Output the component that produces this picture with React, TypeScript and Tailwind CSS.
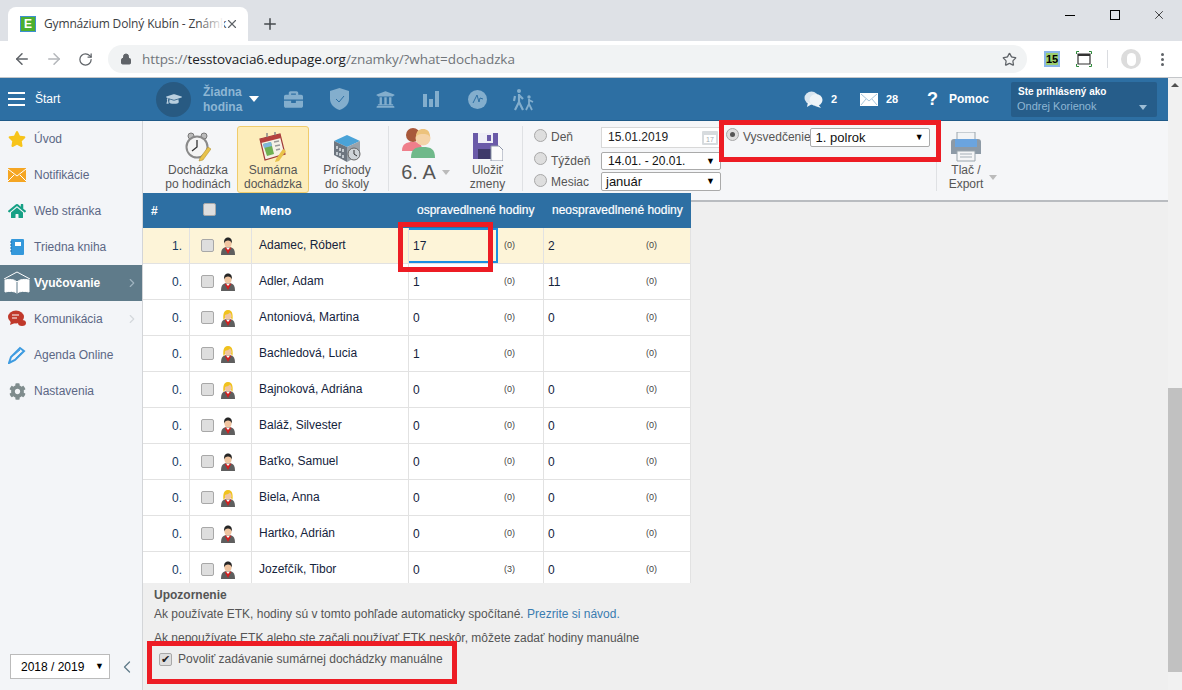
import { FaBriefcase, FaCog, FaGraduationCap, FaHome, FaStar, FaUniversity } from "react-icons/fa";
import { ArrowLeft, ArrowRight, ChevronLeft, ChevronRight, Lock, Plus, RotateCw, Star, X } from "lucide-react";

type Student = { name: string; f?: boolean; a: string; an: string; b: string };

const students: Student[] = [
  { name: "Adamec, Róbert", a: "17", an: "(0)", b: "2" },
  { name: "Adler, Adam", a: "1", an: "(0)", b: "11" },
  { name: "Antoniová, Martina", f: true, a: "0", an: "(0)", b: "0" },
  { name: "Bachledová, Lucia", f: true, a: "1", an: "(0)", b: "" },
  { name: "Bajnoková, Adriána", f: true, a: "0", an: "(0)", b: "0" },
  { name: "Baláž, Silvester", a: "0", an: "(0)", b: "0" },
  { name: "Baťko, Samuel", a: "0", an: "(0)", b: "0" },
  { name: "Biela, Anna", f: true, a: "0", an: "(0)", b: "0" },
  { name: "Hartko, Adrián", a: "0", an: "(0)", b: "0" },
  { name: "Jozefčík, Tibor", a: "0", an: "(3)", b: "0" },
];

const Person = ({ f }: { f?: boolean }) => (
  <svg width="14" height="18" viewBox="0 0 14 18">
    <path d="M0 18c0-6 2-8 7-8s7 2 7 8z" fill="#5e5e5e" />
    <path d="M3.500 10.500L7 17l3.500-6.500L7 11.500z" fill="#d32020" />
    <path d="M5 10.500h4L7 13z" fill="#fff" />
    <ellipse cx="7" cy="6" rx="3.600" ry="4.500" fill="#f0c4a0" />
    {f ? (
      <path d="M2.500 11C2 7 2 1 7 1s5 6 4.500 10L10 9c.8-2 .5-4-1-5.500C8 5 5 5.500 4 6c-.2 1 0 2 0 3z" fill="#f0c21d" />
    ) : (
      <path d="M3.200 6.500C2.500 2 5 .5 7 .5s4.500 1.500 3.800 6C10.300 4.500 9 3.500 7 3.500S3.700 4.500 3.200 6.500z" fill="#262626" />
    )}
  </svg>
);

const Check = () => (
  <span className="inline-block w-[13px] h-[13px] rounded-[2px] border border-[#a8a8a8] bg-[#dedede]" />
);

const Radio = ({ on, cls }: { on?: boolean; cls?: string }) => (
  <span className={`w-[13px] h-[13px] rounded-full border border-[#a8a8a8] bg-[#dedede] flex items-center justify-center shrink-0 ${cls ?? ""}`}>
    {on && <span className="w-[5px] h-[5px] rounded-full bg-[#555]" />}
  </span>
);

const Caret = () => <span className="text-[9px] text-black leading-none">▼</span>;

const SideRow = ({ icon, label, active, arrow }: { icon: React.ReactNode; label: string; active?: boolean; arrow?: boolean }) => (
  <div className={`h-[36px] flex items-center ${active ? "bg-[#5f7b8a] text-white font-bold" : "text-[#5b6785]"}`}>
    <span className="w-[34px] flex justify-center shrink-0">{icon}</span>
    <span className="text-[12px] flex-1">{label}</span>
    {arrow && <ChevronRight size={14} className={`mr-[3px] ${active ? "text-[#9fb3bf]" : "text-[#d4d8dc]"}`} />}
  </div>
);

const Clock = () => (
  <svg width="26" height="30" viewBox="0 0 26 30">
    <circle cx="6" cy="4" r="3" fill="#bbb" stroke="#777" />
    <circle cx="19" cy="4" r="3" fill="#bbb" stroke="#777" />
    <circle cx="12" cy="15" r="10.500" fill="#f4f4f4" stroke="#8a8a8a" strokeWidth="2" />
    <path d="M12 8v7l-5 4" stroke="#333" strokeWidth="1.300" fill="none" />
    <path d="M15 26l8-11 3 2-8 11-4 1z" fill="#e8c24a" stroke="#a8872a" strokeWidth=".5" />
  </svg>
);

const Calendar = () => (
  <svg width="28" height="30" viewBox="0 0 28 30">
    <path d="M1 7l20-5 5 20-20 6z" fill="#f5f1e6" stroke="#a03a3a" strokeWidth="1.200" />
    <path d="M1 7l20-5 1 4-20 5z" fill="#b5413e" />
    <path d="M4 12l8-2 3 12-7 2z" fill="#6fb052" />
    <path d="M4 12l8-2 1 4-8 2z" fill="#7fb6de" />
    <path d="M15 10l5-1M16 14l5-1M17 18l4-1" stroke="#999" strokeWidth="1.300" />
    <path d="M8 5V1M16 3V0" stroke="#888" strokeWidth="1.500" />
    <path d="M17 27l7-10 3 2-7 10-4 1z" fill="#e8c24a" />
  </svg>
);

const Building = () => (
  <svg width="28" height="28" viewBox="0 0 28 28">
    <path d="M1 7l13-6 13 6-13 6z" fill="#4aa3d8" />
    <path d="M1 7v14l13 7V13z" fill="#6d7680" />
    <path d="M27 7v14l-13 7V13z" fill="#9aa3ab" />
    <path d="M4 12v3M7 14v3M10 15v3M4 18v3M7 19v3M10 21v3" stroke="#dfe6ea" strokeWidth="1.500" />
    <circle cx="21" cy="20" r="6" fill="#cfd4d8" stroke="#666" />
    <path d="M21 20v-4M21 20l3 2" stroke="#333" />
  </svg>
);

const Parents = () => (
  <svg width="34" height="32" viewBox="0 0 34 32">
    <circle cx="11" cy="9" r="7" fill="#a8583a" />
    <path d="M0 25c0-7 4-9 11-9s9 2 9 9z" fill="#ef7f8b" />
    <circle cx="21" cy="12" r="7.500" fill="#f5d3a8" />
    <path d="M14 11c0-6 3-8 7-8s7 2 7 8c-2-3-4-3-7-3s-5 0-7 3z" fill="#ecc27c" />
    <path d="M9 32c0-9 4-11 12-11s12 2 12 11z" fill="#6fb98a" />
  </svg>
);

const Floppy = () => (
  <svg width="30" height="28" viewBox="0 0 30 28">
    <path d="M0 0h25v26H0z" fill="#6a5aa8" />
    <path d="M5 0h15v10H5z" fill="#eeeef6" />
    <path d="M14 2h4v6h-4z" fill="#6a5aa8" />
    <path d="M5 16h15v10H5z" fill="#3f3a6a" />
    <path d="M18 13h8l4 4v11H18z" fill="#fbfbfb" stroke="#8c95a8" />
  </svg>
);

const Printer = () => (
  <svg width="30" height="30" viewBox="0 0 30 30">
    <path d="M6 0h18v9H6z" fill="#f2f4f6" stroke="#9aa5ad" />
    <path d="M0 10q0-3 3-3h24q3 0 3 3v12H0z" fill="#8d9aa6" />
    <path d="M4 7h22v8H4z" fill="#6ba4de" />
    <path d="M6 19h18v10H6z" fill="#f5f6f7" stroke="#9aa5ad" />
    <path d="M9 22h12M9 25h12" stroke="#a5afb7" />
  </svg>
);

const Tool = ({ icon, lines, active, w }: { icon: React.ReactNode; lines: string[]; active?: boolean; w: string }) => (
  <div className={`${w} h-[67px] shrink-0 flex flex-col items-center pt-[5px] text-[12px] leading-[14px] text-[#555] rounded-[3px] ${active ? "bg-[#fdedbb] border border-[#f0cc6c]" : "border border-transparent"}`}>
    <span className="h-[30px] flex items-end mb-[1px]">{icon}</span>
    {lines.map((l) => (
      <span key={l}>{l}</span>
    ))}
  </div>
);

const Walkers = () => (
  <svg width="23" height="23" viewBox="0 0 23 23" fill="none" stroke="#83aecd" strokeWidth="2.200">
    <circle cx="7" cy="3" r="2" fill="#83aecd" stroke="none" />
    <path d="M7 6v8l-4 8M7 14l4 8M3 8l-1 5M7 7l4 4" />
    <circle cx="17" cy="9" r="1.700" fill="#83aecd" stroke="none" />
    <path d="M17 11v5l-3 6M17 16l3 6M17 12l4 2" strokeWidth="1.800" />
  </svg>
);

export default function App() {
  return (
    <div className="w-[1182px] h-[690px] overflow-hidden flex flex-col bg-white font-['Liberation_Sans',Arial,sans-serif] relative">
      {/* browser tabs */}
      <div className="h-[41px] bg-[#dee1e6] flex items-end shrink-0">
        <div className="ml-[8px] w-[240px] h-[34px] bg-white rounded-t-[8px] flex items-center pl-[12px] relative">
          <span className="w-[16px] h-[16px] bg-[#4caf2f] border border-[#3d8fd0] flex items-center justify-center text-white text-[12px] font-bold leading-none shrink-0">E</span>
          <span className="ml-[8px] text-[12px] text-[#3c4043] font-['Open_Sans',sans-serif] tracking-[-0.15px] whitespace-nowrap">Gymnázium Dolný Kubín - Známk</span>
          <span className="absolute left-[190px] top-0 w-[26px] h-full bg-gradient-to-r from-transparent to-white" />
          <X size={14} className="absolute left-[217px] top-[10px] text-[#5f6368]" />
        </div>
        <Plus size={18} className="ml-[13px] mb-[8px] text-[#45494d]" />
        <div className="ml-auto h-[41px] flex items-start mr-[3px]">
          <div className="w-[46px] h-[30px] flex items-center justify-center">
            <span className="w-[10px] h-px bg-black" />
          </div>
          <div className="w-[46px] h-[30px] flex items-center justify-center -ml-[1px]">
            <span className="w-[10px] h-[10px] border border-black" />
          </div>
          <div className="w-[41px] h-[30px] flex items-center justify-center">
            <X size={14} strokeWidth={1.200} className="text-black" />
          </div>
        </div>
      </div>

      {/* browser toolbar */}
      <div className="h-[37px] bg-white border-b border-[#c4c6c9] flex items-center shrink-0">
        <ArrowLeft size={18} className="ml-[13px] text-[#5f6368]" />
        <ArrowRight size={18} className="ml-[14px] text-[#b4b7bb]" />
        <RotateCw size={15} className="ml-[15px] text-[#5f6368]" />
        <div className="ml-[15px] w-[919px] h-[28px] rounded-full bg-[#f1f3f4] flex items-center pl-[12px] pr-[10px]">
          <Lock size={12} className="text-[#5f6368]" fill="#5f6368" />
          <span className="ml-[10px] text-[13.500px] text-[#70757a] font-['Open_Sans',sans-serif] tracking-[-0.08px]">
            https://<span className="text-[#202124]">tesstovacia6.edupage.org</span>/znamky/?what=dochadzka
          </span>
          <Star size={15} className="ml-auto text-[#5f6368]" />
        </div>
        <span className="ml-[17px] w-[16px] h-[16px] bg-[#9ccf6f] border-2 border-[#8ab6e8] text-[11px] font-bold text-black leading-none flex items-center justify-center">15</span>
        <svg width="16" height="16" viewBox="0 0 16 16" className="ml-[16px]" fill="none">
          <path d="M2 3h12v10H2z" stroke="#333" strokeWidth="1.200" />
          <path d="M2 3h12v2H2z" fill="#333" />
          <path d="M.5 3V.5H3M13 .5h2.500V3M.5 13v2.500H3M13 15.500h2.500V13" stroke="#2e8b3a" />
        </svg>
        <span className="ml-[15px] w-px h-[18px] bg-[#dadce0]" />
        <span className="ml-[13px] w-[20px] h-[20px] rounded-full bg-[#dcdcdc] flex items-center justify-center">
          <span className="w-[9px] h-[13px] rounded-full bg-white" />
        </span>
        <span className="ml-[20px] flex flex-col gap-[2px]">
          <span className="w-[3px] h-[3px] rounded-full bg-[#5f6368]" />
          <span className="w-[3px] h-[3px] rounded-full bg-[#5f6368]" />
          <span className="w-[3px] h-[3px] rounded-full bg-[#5f6368]" />
        </span>
      </div>

      <div className="flex flex-1 min-h-0">
        <div className="w-[1168px] flex flex-col min-w-0">
          {/* app top bar */}
          <div className="h-[43px] bg-[#2d6fa3] border-b border-[#1f5a88] flex items-center shrink-0 text-white">
            <span className="ml-[8px] w-[17px] flex flex-col gap-[4px]">
              <span className="h-[2px] bg-white" />
              <span className="h-[2px] bg-white" />
              <span className="h-[2px] bg-white" />
            </span>
            <span className="ml-[10px] text-[12px] w-[121px]">Štart</span>
            <span className="w-[35px] h-[35px] rounded-full bg-[#285a82] flex items-center justify-center">
              <FaGraduationCap size={16} className="text-[#b9cfdf]" />
            </span>
            <span className="ml-[12px] w-[46px] text-[12px] leading-[15px] font-bold text-[#8eb6d4] mt-[2px]">Žiadna hodina</span>
            <span className="w-0 h-0 border-x-[5px] border-x-transparent border-t-[6px] border-t-white" />
            <FaBriefcase size={19} className="ml-[25px] text-[#83aecd]" />
            <svg width="19" height="22" viewBox="0 0 19 22" className="ml-[27px]">
              <path d="M9.500 0l9.500 3v8c0 5-4 9-9.500 11C4 20 0 16 0 11V3z" fill="#83aecd" />
              <path d="M6 11l3 3 5-6" stroke="#2d6fa3" strokeWidth="1" fill="none" />
            </svg>
            <FaUniversity size={19} className="ml-[27px] text-[#83aecd]" />
            <svg width="16" height="16" viewBox="0 0 16 16" className="ml-[28px]" fill="#83aecd">
              <path d="M0 3h4v13H0zM6 8h4v8H6zM12 0h4v16h-4z" />
            </svg>
            <svg width="19" height="19" viewBox="0 0 19 19" className="ml-[29px]">
              <circle cx="9.500" cy="9.500" r="9.500" fill="#83aecd" />
              <path d="M5 13l4-8 2 7 1-4 3 1" stroke="#2d6fa3" fill="none" />
            </svg>
            <span className="ml-[25px] flex"><Walkers /></span>
            <svg width="19" height="19" viewBox="0 0 19 19" className="ml-[269px]" fill="#d9e6f0">
              <ellipse cx="7.500" cy="8" rx="7" ry="6.500" />
              <ellipse cx="12" cy="10" rx="6.500" ry="6" fill="#eef4f8" />
              <path d="M4 12l-1 5 5-3zM14 14l3 4-6-2z" fill="#eef4f8" />
            </svg>
            <span className="ml-[8px] text-[11px] font-bold w-[29px]">2</span>
            <span className="w-[18px] h-[13px] bg-white flex">
              <svg width="18" height="13" viewBox="0 0 18 13" fill="none" stroke="#a8c6dc"><path d="M1 1l8 7 8-7M1 12l5-6M17 12l-5-6" /></svg>
            </span>
            <span className="ml-[8px] text-[11px] font-bold w-[41px]">28</span>
            <span className="text-[18px] font-bold w-[22px] leading-none">?</span>
            <span className="text-[12px] font-bold w-[62px]">Pomoc</span>
            <div className="w-[146px] h-[35px] bg-[#265d8a] rounded-[2px] px-[7px] flex flex-col justify-center relative">
              <span className="text-[10px] font-bold leading-[14px]">Ste prihlásený ako</span>
              <span className="text-[11px] text-[#8eb6d4] leading-[14px] -ml-[1px]">Ondrej Korienok</span>
              <span className="absolute right-[10px] bottom-[7px] w-0 h-0 border-x-[4px] border-x-transparent border-t-[5px] border-t-[#9dbdd5]" />
            </div>
          </div>

          <div className="flex flex-1 min-h-0 bg-[#efefef]">
            {/* sidebar */}
            <div className="w-[143px] shrink-0 bg-[#f3f5f8] border-r border-[#d3d5d8] flex flex-col">
              <SideRow icon={<FaStar size={18} className="text-[#f7c41b]" />} label="Úvod" />
              <SideRow
                icon={
                  <svg width="18" height="14" viewBox="0 0 18 14">
                    <path d="M0 0h18v14H0z" fill="#f5a623" />
                    <path d="M0 1l9 7 9-7M0 13l6-6M18 13l-6-6" stroke="#fff" strokeWidth="1" fill="none" />
                  </svg>
                }
                label="Notifikácie"
              />
              <SideRow icon={<FaHome size={18} className="text-[#16a085]" />} label="Web stránka" />
              <SideRow
                icon={
                  <svg width="14" height="16" viewBox="0 0 14 16">
                    <rect x="1" width="13" height="16" rx="1" fill="#3498db" />
                    <path d="M5 3h6v4H5z" fill="#fff" />
                    <path d="M0 3h2M0 6h2M0 9h2M0 12h2" stroke="#1f6fa8" />
                  </svg>
                }
                label="Triedna kniha"
              />
              <SideRow
                active
                arrow
                icon={
                  <svg width="28" height="24" viewBox="0 0 28 24" fill="none" stroke="#fff" strokeWidth="1">
                    <path d="M1 8l13-7 13 7" />
                    <path d="M2 9c4-1 9-1 12 2 3-3 8-3 12-2v12c-4-1-9-1-12 1-3-2-8-2-12-1z" fill="#fff" />
                    <path d="M14 11v11" stroke="#5f7b8a" />
                  </svg>
                }
                label="Vyučovanie"
              />
              <SideRow
                arrow
                icon={
                  <svg width="18" height="18" viewBox="0 0 18 18">
                    <ellipse cx="8" cy="7" rx="8" ry="6.500" fill="#c0392b" />
                    <path d="M3 11l-1 4 5-2z" fill="#c0392b" />
                    <path d="M4 5h7M4 8h5" stroke="#fff" />
                    <ellipse cx="14" cy="13" rx="4" ry="3" fill="#c0392b" />
                  </svg>
                }
                label="Komunikácia"
              />
              <SideRow
                icon={
                  <svg width="18" height="18" viewBox="0 0 18 18" fill="none" stroke="#3d9be0" strokeWidth="2">
                    <path d="M1 17l2-6L12 2l4 3-9 9z" />
                    <path d="M6 9l6-5M8 12l5-5" strokeWidth="1" />
                  </svg>
                }
                label="Agenda Online"
              />
              <SideRow icon={<FaCog size={17} className="text-[#7f8c8d]" />} label="Nastavenia" />
              <div className="mt-auto mb-[11px] ml-[10px] flex items-center">
                <div className="w-[100px] h-[25px] bg-white border border-[#bbb] flex items-center pl-[10px] pr-[5px] justify-between text-[12px] text-black">
                  2018 / 2019 <Caret />
                </div>
                <ChevronLeft size={20} strokeWidth={1.500} className="ml-[7px] text-[#5f7b8a]" />
              </div>
            </div>

            <div className="flex-1 flex flex-col min-w-0">
              {/* toolbar */}
              <div className="h-[81px] shrink-0 bg-[#f5f6f8] border-b-2 border-b-[#b9bcc0] flex pt-[5px]">
                <div className="ml-[16px] flex h-[67px]">
                  <Tool w="w-[78px]" icon={<Clock />} lines={["Dochádzka", "po hodinách"]} />
                  <Tool w="w-[72px]" active icon={<Calendar />} lines={["Sumárna", "dochádzka"]} />
                  <Tool w="w-[76px]" icon={<Building />} lines={["Príchody", "do školy"]} />
                </div>
                <span className="ml-[3px] w-px h-[65px] bg-[#dfe1e4]" />
                <div className="w-[64px] h-[67px] flex flex-col items-center text-[#555] pr-[5px]">
                  <Parents />
                  <span className="text-[20px] leading-[24px] mt-[2px] relative">
                    6. A
                    <span className="absolute left-[41px] top-[10px] w-0 h-0 border-x-[4px] border-x-transparent border-t-[5px] border-t-[#bbb]" />
                  </span>
                </div>
                <div className="w-[69px] h-[67px] flex flex-col items-center text-[12px] leading-[14px] text-[#555] pt-[7px]">
                  <Floppy />
                  <span className="mt-[2px]">Uložiť</span>
                  <span>zmeny</span>
                </div>
                <span className="w-px h-[65px] bg-[#dfe1e4]" />
                <div className="ml-[11px] w-[187px] flex flex-col text-[12px] text-[#555]">
                  <div className="flex items-center h-[22px]">
                    <Radio cls="-mt-[4px]" />
                    <span className="ml-[4px] w-[50px]">Deň</span>
                    <div className="w-[120px] h-[21px] bg-white border border-[#d8d8d8] flex items-center pl-[6px] pr-[2px] justify-between text-[#222]">
                      15.01.2019
                      <svg width="16" height="16" viewBox="0 0 16 16">
                        <rect y="2" width="16" height="14" rx="1" fill="#d7dbde" />
                        <rect x="2" y="6" width="12" height="8" fill="#fff" />
                        <text x="8" y="13" fontSize="7" textAnchor="middle" fill="#a5abb0">17</text>
                      </svg>
                    </div>
                  </div>
                  <div className="flex items-center h-[18px] mt-[4px]">
                    <Radio cls="-mt-[6px]" />
                    <span className="ml-[4px] w-[50px]">Týždeň</span>
                    <div className="w-[120px] h-[18px] bg-white border border-[#aaa] rounded-[2px] flex items-center pl-[6px] pr-[5px] justify-between text-[#111]">
                      14.01. - 20.01. <Caret />
                    </div>
                  </div>
                  <div className="flex items-center h-[19px] mt-[2px]">
                    <Radio cls="-mt-[3px]" />
                    <span className="ml-[4px] w-[50px]">Mesiac</span>
                    <div className="w-[120px] h-[19px] bg-white border border-[#aaa] rounded-[2px] flex items-center pl-[4px] pr-[5px] justify-between text-[#111] text-[13px]">
                      január <Caret />
                    </div>
                  </div>
                </div>
                <div className="ml-[5px] w-[210px] flex items-start text-[12px] text-[#555] pt-[2px]">
                  <Radio on />
                  <span className="ml-[4px]">Vysvedčenie</span>
                  <div className="-ml-[1px] w-[120px] h-[19px] bg-white border border-[#aaa] rounded-[2px] flex items-center px-[5px] justify-between text-[#111] text-[13px]">
                    1. polrok <Caret />
                  </div>
                </div>
                <span className="w-px h-[65px] bg-[#dfe1e4]" />
                <div className="ml-[8px] w-[42px] flex flex-col items-center text-[12px] leading-[14px] text-[#555] pt-[6px] relative">
                  <Printer />
                  <span className="mt-[1px]">Tlač /</span>
                  <span>Export</span>
                  <span className="absolute left-[44px] top-[49px] w-0 h-0 border-x-[4px] border-x-transparent border-t-[5px] border-t-[#bbb]" />
                </div>
              </div>

              {/* table, sits a bit over the toolbar */}
              <div className="w-[548px] h-[390px] -mt-[9px] relative overflow-hidden shrink-0">
                <div className="h-[35px] bg-[#2d6fa3] flex text-[12px] font-bold text-white items-center">
                  <span className="w-[47px] pl-[8px] mt-[1px]">#</span>
                  <span className="w-[62px] pl-[13px] -mt-[2px] flex"><Check /></span>
                  <span className="w-[157px] pl-[8px] mt-[1px]">Meno</span>
                  <span className="w-[135px] pl-[8px] whitespace-nowrap font-normal [-webkit-text-stroke:0.2px_white] -mt-[1px]">ospravedlnené hodiny</span>
                  <span className="pl-[8px] whitespace-nowrap font-normal [-webkit-text-stroke:0.2px_white] -mt-[1px]">neospravedlnené hodiny</span>
                </div>
                {students.map((s, i) => (
                  <div key={s.name} className={`h-[36px] flex items-stretch text-[12px] border-b border-r border-[#e2e2e2] ${i === 0 ? "bg-[#fdf4d8]" : "bg-white"}`}>
                    <span className="w-[47px] border-r border-[#e2e2e2] flex items-center justify-end pr-[7px] text-[#163a5f]">{i === 0 ? "1." : "0."}</span>
                    <span className="w-[62px] border-r border-[#e2e2e2] flex items-center pl-[11px] gap-[7px]">
                      <Check />
                      <Person f={s.f} />
                    </span>
                    <span className="w-[157px] border-r border-[#e2e2e2] flex items-center pl-[7px] pb-[1px] text-[#14233c]">{s.name}</span>
                    <span className="w-[135px] border-r border-[#e2e2e2] flex items-center text-[#14233c]">
                      <span className={`w-[89px] self-stretch flex items-center pl-[4px] ${i === 0 ? "border-2 border-l-0 border-[#1a8fe0]" : ""}`}>{s.a}</span>
                      <span className="ml-[6px] text-[9px] text-[#444]">{s.an}</span>
                    </span>
                    <span className="flex-1 flex items-center pl-[4px] text-[#14233c]">
                      <span className="w-[98px]">{s.b}</span>
                      <span className="text-[9px] text-[#444]">(0)</span>
                    </span>
                  </div>
                ))}
              </div>

              {/* note */}
              <div className="pl-[11px] pt-[5px] text-[12px] text-[#555] leading-[14px]">
                <div className="font-bold">Upozornenie</div>
                <div className="mt-[5px]">
                  Ak používate ETK, hodiny sú v tomto pohľade automaticky spočítané. <span className="text-[#3a7cb0]">Prezrite si návod.</span>
                </div>
                <div className="mt-[10px]">Ak nepoužívate ETK alebo ste začali používať ETK neskôr, môžete zadať hodiny manuálne</div>
                <div className="mt-[7px] ml-[5px] flex items-center gap-[6px]">
                  <span className="w-[13px] h-[13px] rounded-[2px] border border-[#a8a8a8] bg-[#dedede] flex items-center justify-center text-[11px] leading-none text-[#222]">✔</span>
                  Povoliť zadávanie sumárnej dochádzky manuálne
                </div>
              </div>
            </div>
          </div>
        </div>

        {/* page scrollbar */}
        <div className="w-[14px] bg-[#f1f1f1] flex flex-col items-center relative">
          <span className="mt-[5px] w-0 h-0 border-x-[4px] border-x-transparent border-b-[4px] border-b-[#505050]" />
          <span className="mt-[301px] w-full h-[284px] bg-[#c1c1c1]" />
        </div>
      </div>

      {/* red annotation boxes */}
      <div className="absolute left-[719px] top-[120px] w-[222px] h-[42px] border-[5px] border-[#ed1c24] pointer-events-none" />
      <div className="absolute left-[398px] top-[222px] w-[95px] h-[50px] border-[5px] border-[#ed1c24] pointer-events-none" />
      <div className="absolute left-[147px] top-[641px] w-[310px] h-[43px] border-[5px] border-[#ed1c24] pointer-events-none" />
    </div>
  );
}
